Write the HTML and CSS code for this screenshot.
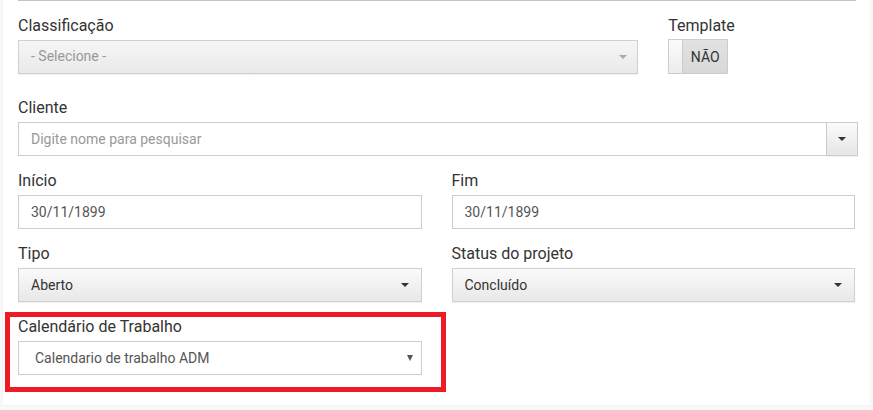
FILE: index.html
```html
<!DOCTYPE html>
<html lang="pt">
<head>
<meta charset="utf-8">
<link rel="stylesheet" href="styles.css">
</head>
<body>
<div class="panel">
  <div class="topline"></div>
  <div class="row row-first">
    <div class="col col-9">
      <label class="lbl">Classificação</label>
      <div class="select select-disabled">
        <span class="placeholder">- Selecione -</span>
        <span class="caret caret-light"></span>
      </div>
    </div>
    <div class="col col-3">
      <label class="lbl">Template</label>
      <div class="toggle">
        <span class="toggle-handle"></span>
        <span class="toggle-label">NÃO</span>
      </div>
    </div>
  </div>
  <div class="row">
    <div class="col col-12">
      <label class="lbl">Cliente</label>
      <div class="input-group">
        <div class="input input-grow"><span class="placeholder">Digite nome para pesquisar</span></div>
        <div class="btn-addon"><span class="caret"></span></div>
      </div>
    </div>
  </div>
  <div class="row">
    <div class="col col-6">
      <label class="lbl">Início</label>
      <div class="input"><span class="value">30/11/1899</span></div>
    </div>
    <div class="col col-6">
      <label class="lbl">Fim</label>
      <div class="input"><span class="value">30/11/1899</span></div>
    </div>
  </div>
  <div class="row">
    <div class="col col-6">
      <label class="lbl">Tipo</label>
      <div class="select">
        <span class="value-dark">Aberto</span>
        <span class="caret"></span>
      </div>
    </div>
    <div class="col col-6">
      <label class="lbl">Status do projeto</label>
      <div class="select">
        <span class="value-dark">Concluído</span>
        <span class="caret"></span>
      </div>
    </div>
  </div>
  <div class="row row-last">
    <div class="col col-6">
      <label class="lbl">Calendário de Trabalho</label>
      <div class="native-select">
        <span class="value">Calendario de trabalho ADM</span>
        <span class="tri"></span>
      </div>
    </div>
  </div>
  <div class="highlight"></div>
</div>
</body>
</html>
```

FILE: styles.css
```css
* { box-sizing: border-box; }
html, body { margin: 0; padding: 0; }
body {
  background: #f8f8f8;
  font-family: Roboto, "Liberation Sans", Arial, sans-serif;
  width: 873px;
  height: 410px;
  overflow: hidden;
}
.panel {
  position: relative;
  margin-left: 3px;
  width: 867px;
  height: 405px;
  background: #fff;
  box-shadow: 0 0 1px rgba(0,0,0,0.1);
}
.topline {
  margin: 0 14px 0 15px;
  height: 1px;
  background: #c4c4c4;
}
.row {
  display: flex;
  margin-bottom: 15px;
}
.row-first { padding-top: 15px; margin-bottom: 24px; }
.col { padding: 0 15px; }
.col-12 { width: 100%; }
.col-9 { width: 75%; }
.col-6 { width: 50%; }
.col-3 { width: 25%; }
.lbl {
  display: block;
  font-size: 16px;
  line-height: 19px;
  color: #333;
  margin-bottom: 5px;
}
.select, .input, .native-select {
  height: 34px;
  display: flex;
  align-items: center;
  justify-content: space-between;
  font-size: 14px;
  border: 1px solid #ccc;
  padding: 0 12px;
}
.select {
  background: linear-gradient(#fafafa, #e8e8e8);
  box-shadow: 0 1px 1px rgba(0,0,0,0.06);
  border-color: #d0d0d0;
  padding-bottom: 1px;
}
.select-disabled { background: linear-gradient(#f6f6f6, #e9e9e9); padding-bottom: 2px; padding-right: 10px; }
.input { background: #fff; }
.placeholder { color: #999; }
.value { color: #555; }
.value-dark { color: #333; }
.caret {
  width: 0; height: 0;
  border-left: 4px solid transparent;
  border-right: 4px solid transparent;
  border-top: 4px solid #333;
}
.caret-light { border-top-color: #aaa; margin-top: 2px; }
.input-group { display: flex; margin-right: -3px; }
.input-grow { flex: 1; }
.btn-addon {
  width: 31px;
  height: 34px;
  border: 1px solid #ccc;
  border-left: none;
  background: linear-gradient(#fafafa, #e6e6e6);
  display: flex;
  align-items: center;
  justify-content: center;
  box-shadow: 0 1px 1px rgba(0,0,0,0.06);
}
.toggle {
  display: flex;
  width: 60px;
  height: 35px;
  margin-top: -1px;
  border: 1px solid #ccc;
  background: #ddd;
}
.toggle-handle {
  width: 14px;
  background: linear-gradient(#fbfbfb, #ececec);
  border-right: 1px solid #ccc;
}
.toggle-label {
  flex: 1;
  display: flex;
  align-items: center;
  justify-content: center;
  font-size: 14px;
  color: #333;
  background: linear-gradient(#e2e2e2, #d8d8d8);
}
.native-select {
  background: #fff;
  padding: 0 8px 0 16px;
}
.tri {
  width: 0; height: 0;
  border-left: 3px solid transparent;
  border-right: 3px solid transparent;
  border-top: 6px solid #555;
}
.highlight {
  position: absolute;
  left: 2px;
  top: 312px;
  width: 441px;
  height: 80px;
  border: 5px solid #ed1c24;
  pointer-events: none;
}
```
